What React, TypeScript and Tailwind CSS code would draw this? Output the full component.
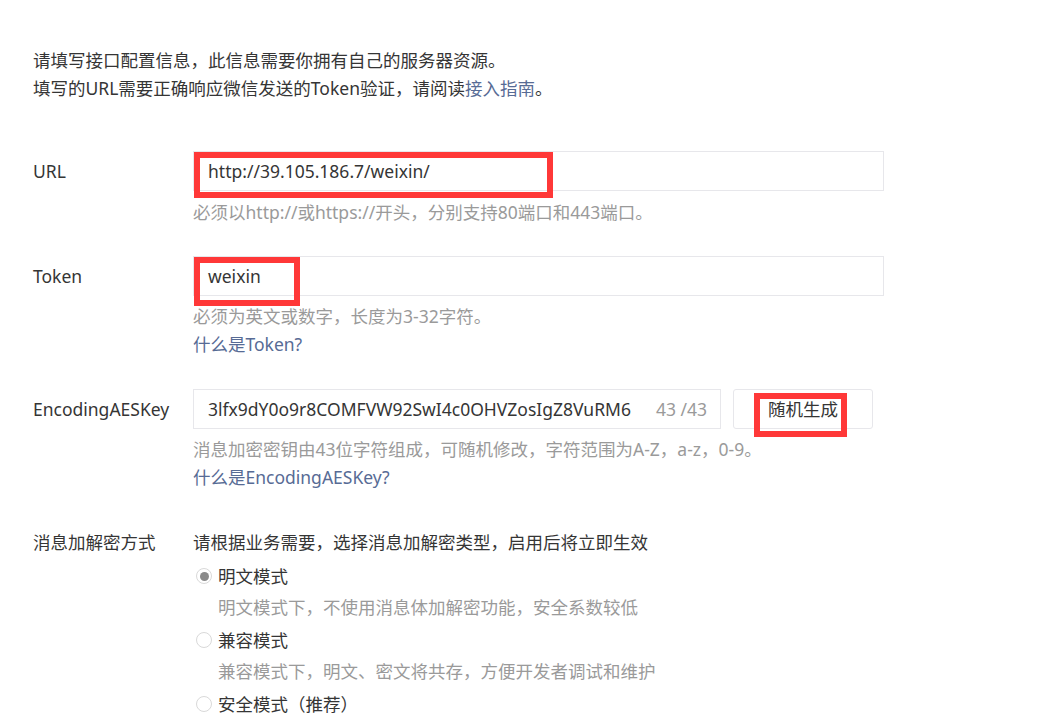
const font = { fontFamily: '"Noto Sans", "Noto Sans CJK SC", sans-serif' };

const Radio = ({ checked }: { checked?: boolean }) => (
  <span className="w-[16px] h-[16px] rounded-full border border-[#d9d9d9] flex items-center justify-center bg-white">
    {checked && <span className="w-[9px] h-[9px] rounded-full bg-[#8a8a8a]" />}
  </span>
);

const modes = [
  { label: "明文模式", desc: "明文模式下，不使用消息体加解密功能，安全系数较低", checked: true },
  { label: "兼容模式", desc: "兼容模式下，明文、密文将共存，方便开发者调试和维护" },
  { label: "安全模式（推荐）", desc: "" },
];

export default function App() {
  return (
    <div
      className="relative w-[1049px] h-[714px] overflow-hidden bg-white text-[17.5px] text-[#353535] pl-[33px] pt-[46px]"
      style={font}
    >
      {/* intro */}
      <div className="leading-[28px]">
        <p>请填写接口配置信息，此信息需要你拥有自己的服务器资源。</p>
        <p>
          填写的URL需要正确响应微信发送的Token验证，请阅读
          <span className="text-[#576b95]">接入指南</span>。
        </p>
      </div>

      {/* URL */}
      <div className="flex mt-[49px]">
        <div className="w-[160px] leading-[40px]">URL</div>
        <div>
          <div className="w-[691px] h-[40px] border border-[#e7e7eb] px-[14px] leading-[38px]">
            http://39.105.186.7/weixin/
          </div>
          <p className="mt-[7px] leading-[28px] text-[#9a9a9a]">
            必须以http://或https://开头，分别支持80端口和443端口。
          </p>
        </div>
      </div>

      {/* Token */}
      <div className="flex mt-[30px]">
        <div className="w-[160px] leading-[40px]">Token</div>
        <div>
          <div className="w-[691px] h-[40px] border border-[#e7e7eb] px-[14px] leading-[38px]">
            weixin
          </div>
          <p className="mt-[6px] leading-[28px] text-[#9a9a9a]">必须为英文或数字，长度为3-32字符。</p>
          <p className="leading-[28px] text-[#576b95]">什么是Token?</p>
        </div>
      </div>

      {/* EncodingAESKey */}
      <div className="flex mt-[31px]">
        <div className="w-[160px] leading-[40px]">EncodingAESKey</div>
        <div>
          <div className="flex gap-[12px]">
            <div className="w-[528px] h-[40px] border border-[#e7e7eb] pl-[14px] pr-[13px] flex items-center">
              <span className="flex-1 min-w-0 overflow-hidden whitespace-nowrap">
                3lfx9dY0o9r8COMFVW92SwI4c0OHVZosIgZ8VuRM6
              </span>
              <span className="text-[#9a9a9a] ml-[5px] whitespace-nowrap">43 /43</span>
            </div>
            <button className="w-[140px] h-[40px] border border-[#e7e7eb] rounded-[3px] bg-white">
              随机生成
            </button>
          </div>
          <p className="mt-[6px] leading-[28px] text-[#9a9a9a]">
            消息加密密钥由43位字符组成，可随机修改，字符范围为A-Z，a-z，0-9。
          </p>
          <p className="leading-[28px] text-[#576b95]">什么是EncodingAESKey?</p>
        </div>
      </div>

      {/* encryption mode */}
      <div className="flex mt-[37px]">
        <div className="w-[160px] leading-[28px]">消息加解密方式</div>
        <div className="leading-[28px]">
          <p>请根据业务需要，选择消息加解密类型，启用后将立即生效</p>
          <div className="mt-[5px] flex flex-col">
            {modes.map((m) => (
              <div key={m.label} className="pl-[3px]">
                <div className="flex items-center gap-[6px] h-[30px]">
                  <Radio checked={m.checked} />
                  <span>{m.label}</span>
                </div>
                {m.desc && (
                  <p className="pl-[22px] mt-[2px] mb-[4px] text-[#9a9a9a]">{m.desc}</p>
                )}
              </div>
            ))}
          </div>
        </div>
      </div>

      {/* red annotation boxes */}
      <div className="absolute left-[194px] top-[152px] w-[359px] h-[46px] border-[6px] border-[#ff3838]" />
      <div className="absolute left-[194px] top-[257px] w-[106px] h-[49px] border-[6px] border-[#ff3838]" />
      <div className="absolute left-[754px] top-[393px] w-[93px] h-[44px] border-[6px] border-[#ff3838]" />
    </div>
  );
}
